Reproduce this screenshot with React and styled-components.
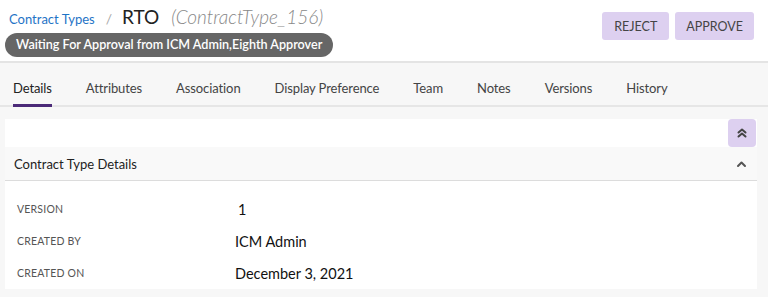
import styled, { createGlobalStyle } from 'styled-components'

const GlobalStyle = createGlobalStyle`
	html, body {
		margin: 0;
		padding: 0;
		background: #f7f7f7;
	}
	body {
		font-family: Lato, "Open Sans", sans-serif;
		color: #222;
	}
	* {
		box-sizing: border-box;
	}
`

const Page = styled.div`
	width: 768px;
	height: 297px;
	overflow: hidden;
	background: #f7f7f7;
`

const Header = styled.div`
	display: flex;
	justify-content: space-between;
	align-items: flex-start;
	height: 63px;
	padding: 5px 14px 0 5px;
	background: #fff;
	border-bottom: 2px solid #e4e4e4;
`

const TitleBlock = styled.div`
	display: flex;
	flex-direction: column;
	align-items: flex-start;
`

const Crumbs = styled.div`
	display: flex;
	align-items: baseline;
	padding-left: 4px;
	height: 28px;
`

const CrumbLink = styled.a`
	color: #1f74c6;
	font-size: 13px;
	text-decoration: none;
`

const Slash = styled.span`
	color: #aaa;
	font-size: 14px;
	margin: 0 10px 0 11px;
`

const Title = styled.span`
	font-size: 19px;
	color: #222;
	margin-right: 12px;
`

const Code = styled.span`
	font-size: 19px;
	font-style: italic;
	color: #888;
	font-weight: 300;
`

const Badge = styled.div`
	background: #666;
	color: #fff;
	font-size: 12.6px;
	font-weight: 600;
	height: 24px;
	line-height: 24px;
	padding: 0 11px;
	border-radius: 12px;
`

const Actions = styled.div`
	display: flex;
	gap: 6px;
	padding-top: 7px;
`

const ActionButton = styled.button`
	background: #ddd0f0;
	color: #444;
	border: none;
	border-radius: 3px;
	font-family: inherit;
	font-size: 12.5px;
	height: 28px;
	padding: 0 ${(p) => p.$pad || 12}px;
	cursor: pointer;
`

const Tabs = styled.div`
	display: flex;
	height: 44px;
	border-bottom: 2px solid #e6e6e6;
`

const Tab = styled.div`
	position: relative;
	display: flex;
	align-items: center;
	padding: 8px 17px 0 13px;
	margin-right: 4px;
	font-size: 13px;
	letter-spacing: -0.1px;
	color: ${(p) => (p.$active ? '#222' : '#444')};

	&::after {
		content: '';
		display: ${(p) => (p.$active ? 'block' : 'none')};
		position: absolute;
		left: 13px;
		right: 17px;
		bottom: -2px;
		height: 3px;
		background: #4b2a78;
	}
`

const Body = styled.div`
	padding: 12px 11px 0 5px;
`

const Card = styled.div`
	background: #fff;
`

const Toolbar = styled.div`
	display: flex;
	justify-content: flex-end;
	padding-right: 1px;
`

const CollapseAll = styled.button`
	display: flex;
	align-items: center;
	justify-content: center;
	width: 28px;
	height: 28px;
	border: none;
	border-radius: 4px;
	background: #ddd0f0;
	padding: 0;
`

const SectionHead = styled.div`
	display: flex;
	justify-content: space-between;
	align-items: center;
	height: 34px;
	padding: 1px 10px 0 9px;
	background: #f9f9f9;
	border-bottom: 1px solid #dcdcdc;
	font-size: 13px;
	color: #222;
`

const Fields = styled.div`
	padding: 12px 0 0 12px;
`

const Field = styled.div`
	display: grid;
	grid-template-columns: 218px 1fr;
	align-items: center;
	height: 32px;
`

const Label = styled.div`
	font-size: 10.5px;
	color: #555;
	text-transform: uppercase;
	letter-spacing: 0.2px;
`

const Value = styled.div`
	font-size: 14.5px;
	color: #111;
	padding-left: ${(p) => p.$indent || 0}px;
`

const DoubleChevron = () => (
	<svg width="12" height="12" viewBox="0 0 12 12" fill="none" stroke="#444" strokeWidth="2" strokeLinecap="round" strokeLinejoin="round">
		<polyline points="2.5,5.5 6,2.5 9.5,5.5" />
		<polyline points="2.5,9.5 6,6.5 9.5,9.5" />
	</svg>
)

const Chevron = () => (
	<svg width="11" height="8" viewBox="0 0 11 8" fill="none" stroke="#555" strokeWidth="2" strokeLinecap="round" strokeLinejoin="round">
		<polyline points="2,6 5.5,2.5 9,6" />
	</svg>
)

const tabs = ['Details', 'Attributes', 'Association', 'Display Preference', 'Team', 'Notes', 'Versions', 'History']

const fields = [
	{ label: 'Version', value: '1', indent: 3 },
	{ label: 'Created By', value: 'ICM Admin' },
	{ label: 'Created On', value: 'December 3, 2021' },
]

export default function App() {
	return (
		<Page>
			<GlobalStyle />
			<Header>
				<TitleBlock>
					<Crumbs>
						<CrumbLink href="#">Contract Types</CrumbLink>
						<Slash>/</Slash>
						<Title>RTO</Title>
						<Code>(ContractType_156)</Code>
					</Crumbs>
					<Badge>Waiting For Approval from ICM Admin,Eighth Approver</Badge>
				</TitleBlock>
				<Actions>
					<ActionButton>REJECT</ActionButton>
					<ActionButton $pad={11}>APPROVE</ActionButton>
				</Actions>
			</Header>
			<Tabs>
				{tabs.map((t, i) => (
					<Tab key={t} $active={i === 0}>
						{t}
					</Tab>
				))}
			</Tabs>
			<Body>
				<Card>
					<Toolbar>
						<CollapseAll>
							<DoubleChevron />
						</CollapseAll>
					</Toolbar>
					<SectionHead>
						Contract Type Details
						<Chevron />
					</SectionHead>
					<Fields>
						{fields.map((f) => (
							<Field key={f.label}>
								<Label>{f.label}</Label>
								<Value $indent={f.indent}>{f.value}</Value>
							</Field>
						))}
					</Fields>
				</Card>
			</Body>
		</Page>
	)
}
